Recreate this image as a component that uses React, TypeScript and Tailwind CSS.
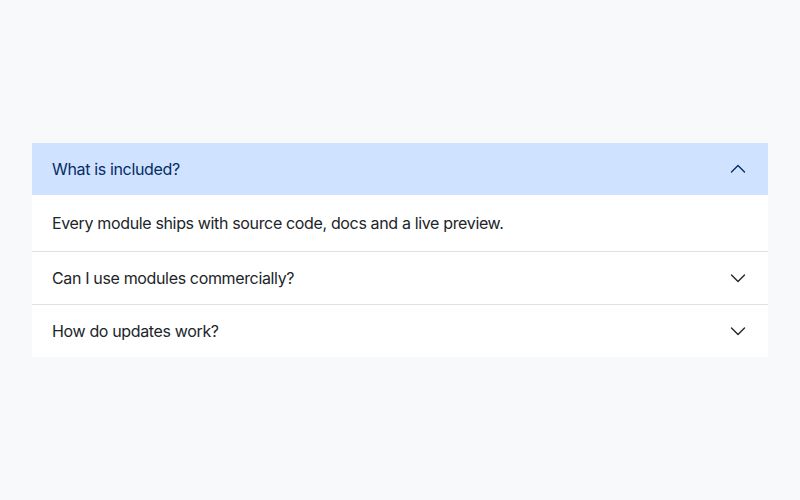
import { useState } from "react";

const items = [
  {
    q: "What is included?",
    a: "Every module ships with source code, docs and a live preview.",
  },
  {
    q: "Can I use modules commercially?",
    a: "Yes, every license covers commercial projects.",
  },
  {
    q: "How do updates work?",
    a: "Updates are delivered through your account dashboard.",
  },
];

const Chevron = ({ up }: { up: boolean }) => (
  <svg
    width="16"
    height="16"
    viewBox="0 0 16 16"
    fill="none"
    stroke="currentColor"
    strokeWidth="1.4"
    strokeLinecap="round"
    strokeLinejoin="round"
    className={up ? "rotate-180" : ""}
  >
    <path d="M1.5 5L8 11.5L14.5 5" />
  </svg>
);

export default function App() {
  const [open, setOpen] = useState(0);

  return (
    <div
      className="min-h-[500px] w-full bg-[#f8f9fb] flex items-center px-8 tracking-[-0.35px]"
      style={{ fontFamily: "Inter, 'Noto Sans', sans-serif" }}
    >
      <div className="w-full bg-white">
        {items.map((item, i) => {
          const isOpen = open === i;
          return (
            <div key={i} className={i > 0 ? "border-t border-[#dee2e6]" : ""}>
              <button
                onClick={() => setOpen(isOpen ? -1 : i)}
                className={`w-full flex items-center justify-between px-5 h-[52px] text-left text-base ${
                  isOpen ? "bg-[#cfe2ff] text-[#052c65]" : "bg-white text-[#212529]"
                }`}
              >
                <span>{item.q}</span>
                <span className="mr-[2px]">
                  <Chevron up={isOpen} />
                </span>
              </button>
              {isOpen && (
                <div className="px-5 h-[56px] flex items-center text-base text-[#212529]">
                  {item.a}
                </div>
              )}
            </div>
          );
        })}
      </div>
    </div>
  );
}
